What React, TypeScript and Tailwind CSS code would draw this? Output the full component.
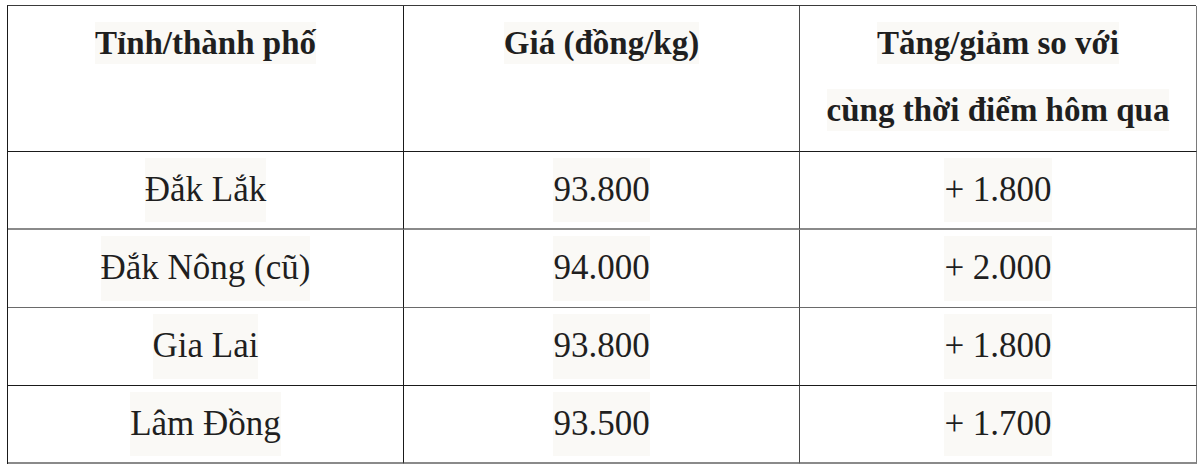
import React from "react";

const serif = { fontFamily: '"Liberation Serif", "Times New Roman", serif' };

function H({ children }: { children: React.ReactNode }) {
  return <span className="bg-[#faf9f6] py-[3px]">{children}</span>;
}
function D({ children }: { children: React.ReactNode }) {
  return <span className="bg-[#faf9f6] py-[6px]">{children}</span>;
}

const rows: { name: string; price: string; diff: string; b: string }[] = [
  { name: "Đắk Lắk", price: "93.800", diff: "+ 1.800", b: "border-[#8a8a8a] border-b-2" },
  { name: "Đắk Nông (cũ)", price: "94.000", diff: "+ 2.000", b: "border-[#6a6a6a] border-b" },
  { name: "Gia Lai", price: "93.800", diff: "+ 1.800", b: "border-[#1a1a1a] border-b" },
  { name: "Lâm Đồng", price: "93.500", diff: "+ 1.700", b: "border-[#8a8a8a] border-b-2" },
];

export default function App() {
  return (
    <div className="w-[1200px] h-[468px] bg-white pt-[5px] pl-[7px]" style={serif}>
      <div className="grid grid-cols-[396px_396px_397px] w-[1189px] border-t border-l border-t-[#3a3a3a] border-l-[#1a1a1a] text-[#1f1f1f]">
        <div className="h-[146px] border-b border-r border-b-[#1a1a1a] border-r-[#1a1a1a] text-center font-bold text-[33px] leading-[67px] pt-[4px]">
          <H>Tỉnh/thành phố</H>
        </div>
        <div className="h-[146px] border-b border-r border-b-[#1a1a1a] border-r-[#4a4a4a] text-center font-bold text-[33px] leading-[67px] pt-[4px]">
          <H>Giá (đồng/kg)</H>
        </div>
        <div className="h-[146px] border-b border-r border-b-[#1a1a1a] border-r-[#7a7a7a] text-center font-bold text-[33px] leading-[67px] pt-[4px]">
          <div><H>Tăng/giảm so với</H></div>
          <div><H>cùng thời điểm hôm qua</H></div>
        </div>
        {rows.map((r, i) => (
          <React.Fragment key={i}>
            <div className={`h-[78px] flex items-center justify-center text-[35px] border-r border-r-[#1a1a1a] ${r.b}`}>
              <D>{r.name}</D>
            </div>
            <div className={`h-[78px] flex items-center justify-center text-[35px] border-r border-r-[#4a4a4a] ${r.b}`}>
              <D>{r.price}</D>
            </div>
            <div className={`h-[78px] flex items-center justify-center text-[35px] border-r border-r-[#7a7a7a] ${r.b}`}>
              <D>{r.diff}</D>
            </div>
          </React.Fragment>
        ))}
      </div>
    </div>
  );
}
